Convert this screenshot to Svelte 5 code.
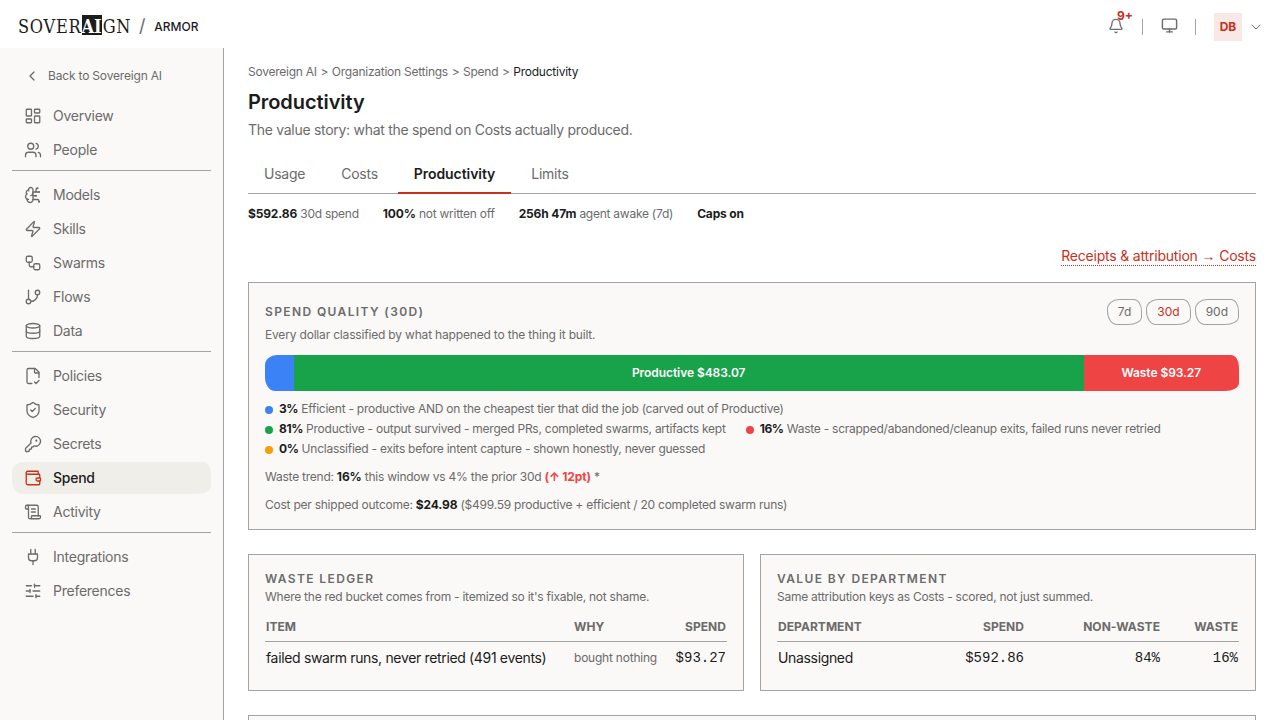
<script>
  const icons = {
    overview: ['M4 3h5a1 1 0 0 1 1 1v7a1 1 0 0 1-1 1H4a1 1 0 0 1-1-1V4a1 1 0 0 1 1-1z', 'M15 3h5a1 1 0 0 1 1 1v3a1 1 0 0 1-1 1h-5a1 1 0 0 1-1-1V4a1 1 0 0 1 1-1z', 'M15 12h5a1 1 0 0 1 1 1v7a1 1 0 0 1-1 1h-5a1 1 0 0 1-1-1v-7a1 1 0 0 1 1-1z', 'M4 16h5a1 1 0 0 1 1 1v3a1 1 0 0 1-1 1H4a1 1 0 0 1-1-1v-3a1 1 0 0 1 1-1z'],
    people: ['M16 21v-2a4 4 0 0 0-4-4H6a4 4 0 0 0-4 4v2', 'M16 3.128a4 4 0 0 1 0 7.744', 'M22 21v-2a4 4 0 0 0-3-3.87', 'M5 7a4 4 0 1 0 8 0a4 4 0 1 0-8 0'],
    models: ['M12 5a3 3 0 1 0-5.997.125 4 4 0 0 0-2.526 5.77 4 4 0 0 0 .556 6.588A4 4 0 1 0 12 18Z', 'M9 13a4.5 4.5 0 0 0 3-4', 'M6.003 5.125A3 3 0 0 0 6.401 6.5', 'M3.477 10.896a4 4 0 0 1 .585-.396', 'M6 18a4 4 0 0 1-1.967-.516', 'M12 13h4', 'M12 18h6a2 2 0 0 1 2 2v1', 'M12 8h8', 'M16 8V5a2 2 0 0 1 2-2', 'M15.5 13a.5.5 0 1 0 1 0a.5.5 0 1 0-1 0', 'M17.5 3a.5.5 0 1 0 1 0a.5.5 0 1 0-1 0', 'M19.5 21a.5.5 0 1 0 1 0a.5.5 0 1 0-1 0', 'M19.5 8a.5.5 0 1 0 1 0a.5.5 0 1 0-1 0'],
    skills: ['M4 14a1 1 0 0 1-.78-1.63l9.9-10.2a.5.5 0 0 1 .86.46l-1.92 6.02A1 1 0 0 0 13 10h7a1 1 0 0 1 .78 1.63l-9.9 10.2a.5.5 0 0 1-.86-.46l1.92-6.02A1 1 0 0 0 11 14z'],
    swarms: ['M5 3h4a2 2 0 0 1 2 2v4a2 2 0 0 1-2 2H5a2 2 0 0 1-2-2V5a2 2 0 0 1 2-2z', 'M7 11v4a2 2 0 0 0 2 2h4', 'M15 13h4a2 2 0 0 1 2 2v4a2 2 0 0 1-2 2h-4a2 2 0 0 1-2-2v-4a2 2 0 0 1 2-2z'],
    flows: ['M6 3v12', 'M15 6a3 3 0 1 0 6 0a3 3 0 1 0-6 0', 'M3 18a3 3 0 1 0 6 0a3 3 0 1 0-6 0', 'M18 9a9 9 0 0 1-9 9'],
    data: ['M3 5a9 3 0 1 0 18 0a9 3 0 1 0-18 0', 'M3 5v14a9 3 0 0 0 18 0V5', 'M3 12a9 3 0 0 0 18 0'],
    policies: ['M10.5 22H6a2 2 0 0 1-2-2V4a2 2 0 0 1 2-2h8a2.4 2.4 0 0 1 1.706.706l3.588 3.588A2.4 2.4 0 0 1 20 8v6', 'M14 2v5a1 1 0 0 0 1 1h5', 'm14 20 2 2 4-4'],
    security: ['M20 13c0 5-3.5 7.5-7.66 8.95a1 1 0 0 1-.67-.01C7.5 20.5 4 18 4 13V6a1 1 0 0 1 1-1c2 0 4.5-1.2 6.24-2.72a1.17 1.17 0 0 1 1.52 0C14.51 3.81 17 5 19 5a1 1 0 0 1 1 1z', 'm9 12 2 2 4-4'],
    secrets: ['M2.586 17.414A2 2 0 0 0 2 18.828V21a1 1 0 0 0 1 1h3a1 1 0 0 0 1-1v-1a1 1 0 0 1 1-1h1a1 1 0 0 0 1-1v-1a1 1 0 0 1 1-1h.172a2 2 0 0 0 1.414-.586l.814-.814a6.5 6.5 0 1 0-4-4z', 'M16 7.5a.5.5 0 1 0 1 0a.5.5 0 1 0-1 0'],
    spend: ['M19 7V4a1 1 0 0 0-1-1H5a2 2 0 0 0 0 4h15a1 1 0 0 1 1 1v4h-3a2 2 0 0 0 0 4h3a1 1 0 0 0 1-1v-2a1 1 0 0 0-1-1', 'M3 5v14a2 2 0 0 0 2 2h15a1 1 0 0 0 1-1v-4'],
    activity: ['M15 12h-5', 'M15 8h-5', 'M19 17V5a2 2 0 0 0-2-2H4', 'M8 21h12a2 2 0 0 0 2-2v-1a1 1 0 0 0-1-1H11a1 1 0 0 0-1 1v1a2 2 0 1 1-4 0V5a2 2 0 1 0-4 0v2a1 1 0 0 0 1 1h3'],
    integrations: ['M12 22v-5', 'M9 8V2', 'M15 8V2', 'M18 8v5a4 4 0 0 1-4 4h-4a4 4 0 0 1-4-4V8Z'],
    preferences: ['M10 5H3', 'M12 19H3', 'M14 3v4', 'M16 17v4', 'M21 12h-9', 'M21 19h-5', 'M21 5h-7', 'M8 10v4', 'M8 12H3'],
    back: ['m15 18-6-6 6-6'],
    down: ['m6 9 6 6 6-6'],
    bell: ['M10.268 21a2 2 0 0 0 3.464 0', 'M3.262 15.326A1 1 0 0 0 4 17h16a1 1 0 0 0 .74-1.673C19.41 13.956 18 12.499 18 8A6 6 0 0 0 6 8c0 4.499-1.411 5.956-2.738 7.326'],
    monitor: ['M4 3h16a2 2 0 0 1 2 2v10a2 2 0 0 1-2 2H4a2 2 0 0 1-2-2V5a2 2 0 0 1 2-2z', 'M8 21h8', 'M12 17v4'],
  };

  const groups = [
    ['Overview', 'People'],
    ['Models', 'Skills', 'Swarms', 'Flows', 'Data'],
    ['Policies', 'Security', 'Secrets', 'Spend', 'Activity'],
    ['Integrations', 'Preferences'],
  ];

  const crumbs = ['Sovereign AI', 'Organization Settings', 'Spend'];
  const tabs = ['Usage', 'Costs', 'Productivity', 'Limits'];
  const ranges = ['7d', '30d', '90d'];

  const stats = [
    { value: '$592.86', label: '30d spend' },
    { value: '100%', label: 'not written off' },
    { value: '256h 47m', label: 'agent awake (7d)' },
    { value: 'Caps on', label: '' },
  ];

  const segments = [
    { kind: 'efficient', width: 2.95, label: '' },
    { kind: 'productive', width: 81.1, label: 'Productive $483.07' },
    { kind: 'waste', width: 15.95, label: 'Waste $93.27' },
  ];

  const legend = [
    { kind: 'efficient', pct: '3%', text: 'Efficient - productive AND on the cheapest tier that did the job (carved out of Productive)' },
    { kind: 'productive', pct: '81%', text: 'Productive - output survived - merged PRs, completed swarms, artifacts kept' },
    { kind: 'waste', pct: '16%', text: 'Waste - scrapped/abandoned/cleanup exits, failed runs never retried' },
    { kind: 'unknown', pct: '0%', text: 'Unclassified - exits before intent capture - shown honestly, never guessed' },
  ];

  let page = $state('Spend');
  let tab = $state('Productivity');
  let range = $state('30d');
</script>

{#snippet icon(name, size, stroke = 1.75)}
  <svg width={size} height={size} viewBox="0 0 24 24" fill="none" stroke="currentColor" stroke-width={stroke} stroke-linecap="round" stroke-linejoin="round" aria-hidden="true">
    {#each icons[name] as d}<path {d} />{/each}
  </svg>
{/snippet}

<div class="app">
  <header class="topbar">
    <div class="logo">SOVER<span class="logo-ai">AI</span>GN</div>
    <span class="slash">/</span>
    <span class="org">ARMOR</span>
    <div class="tools">
      <button class="tool">{@render icon('bell', 16, 2)}<span class="count">9+</span></button>
      <span class="sep"></span>
      <button class="tool">{@render icon('monitor', 17, 2)}</button>
      <span class="sep"></span>
      <button class="user"><span class="avatar">DB</span>{@render icon('down', 16, 1.5)}</button>
    </div>
  </header>

  <div class="body">
    <nav class="sidebar">
      <button class="back">{@render icon('back', 16, 2)}<span>Back to Sovereign AI</span></button>
      {#each groups as group}
        <div class="group">
          {#each group as name}
            <button class="item" class:active={page === name} onclick={() => (page = name)}>
              {@render icon(name.toLowerCase(), 18)}
              <span>{name}</span>
            </button>
          {/each}
        </div>
      {/each}
    </nav>

    <main class="main">
      <div class="crumbs">
        {#each crumbs as crumb}<span>{crumb}</span><span>&gt;</span>{/each}
        <span class="here">Productivity</span>
      </div>
      <h1>Productivity</h1>
      <p class="lead">The value story: what the spend on Costs actually produced.</p>

      <div class="tabs">
        {#each tabs as name}
          <button class="tab" class:active={tab === name} onclick={() => (tab = name)}>{name}</button>
        {/each}
      </div>

      <div class="stats">
        {#each stats as stat}
          <span><b>{stat.value}</b> {stat.label}</span>
        {/each}
      </div>

      <div class="receipts"><a href="#costs">Receipts &amp; attribution <span class="arrow">→</span> Costs</a></div>

      <section class="card quality">
        <div class="card-head">
          <h2>Spend quality (30d)</h2>
          <div class="ranges">
            {#each ranges as r}
              <button class="pill" class:active={range === r} onclick={() => (range = r)}>{r}</button>
            {/each}
          </div>
        </div>
        <p class="hint">Every dollar classified by what happened to the thing it built.</p>

        <div class="bar">
          {#each segments as seg}
            <div class="seg {seg.kind}" style:width="{seg.width}%">{seg.label}</div>
          {/each}
        </div>

        <div class="legend">
          {#each legend as row}
            <span class="key"><i class="dot {row.kind}"></i><span><b>{row.pct}</b> {row.text}</span></span>
          {/each}
        </div>

        <p class="note">Waste trend: <b>16%</b> this window vs 4% the prior 30d <b class="up">(↑ 12pt)</b> *</p>
        <p class="note">Cost per shipped outcome: <b>$24.98</b> ($499.59 productive + efficient / 20 completed swarm runs)</p>
      </section>

      <div class="pair">
        <section class="card">
          <h2>Waste ledger</h2>
          <p class="hint">Where the red bucket comes from - itemized so it's fixable, not shame.</p>
          <table class="ledger">
            <thead><tr><th>Item</th><th>Why</th><th class="num">Spend</th></tr></thead>
            <tbody>
              <tr><td>failed swarm runs, never retried (491 events)</td><td class="why">bought nothing</td><td class="num">$93.27</td></tr>
            </tbody>
          </table>
        </section>

        <section class="card">
          <h2>Value by department</h2>
          <p class="hint">Same attribution keys as Costs - scored, not just summed.</p>
          <table class="depts">
            <thead><tr><th>Department</th><th class="num">Spend</th><th class="num">Non-waste</th><th class="num">Waste</th></tr></thead>
            <tbody>
              <tr><td>Unassigned</td><td class="num">$592.86</td><td class="num">84%</td><td class="num">16%</td></tr>
            </tbody>
          </table>
        </section>
      </div>

      <section class="card next"></section>
    </main>
  </div>
</div>

<style>
  :global(body) {
    background: #fff;
    overflow: hidden;
  }

  .app {
    --ink: #1c1c1c;
    --muted: #6b6b6b;
    --line: #a3a3a3;
    --panel: #faf9f7;
    --accent: #c9301c;
    --wobble: 12px 8px 14px 10px / 10px 12px 8px 14px;
    height: 100vh;
    display: flex;
    flex-direction: column;
    overflow: hidden;
    font-family: Inter, "Liberation Sans", sans-serif;
    font-size: 14px;
    line-height: 20px;
    letter-spacing: -0.25px;
    color: var(--ink);
  }

  button {
    font: inherit;
    letter-spacing: inherit;
    color: inherit;
    background: none;
    border: none;
    padding: 0;
    cursor: pointer;
  }
  svg { display: block; flex-shrink: 0; }
  h1, h2, p { margin: 0; }
  b { font-weight: 700; letter-spacing: -0.15px; color: var(--ink); }

  .topbar {
    height: 48px;
    flex-shrink: 0;
    display: flex;
    align-items: center;
    padding: 5px 16px 0 18px;
    box-sizing: border-box;
  }
  .logo {
    display: flex;
    width: 113px;
    height: 20px;
    margin-top: -3px;
    font-family: "DejaVu Serif Condensed", "DejaVu Serif", serif;
    font-stretch: condensed;
    font-size: 18px;
    line-height: 24px;
    letter-spacing: 0.75px;
    white-space: nowrap;
  }
  .logo-ai {
    width: 23px;
    margin-right: 1px;
    background: var(--ink);
    color: #fff;
    font-weight: 700;
    text-align: center;
    letter-spacing: 0;
  }
  .slash { margin: -2px 0 0 8px; font-size: 18px; color: var(--muted); }
  .org { margin-left: 9px; font-size: 12px; font-weight: 500; letter-spacing: 0; }

  .tools { margin-left: auto; display: flex; align-items: center; color: var(--muted); }
  .tool { position: relative; top: -1px; }
  .count {
    position: absolute;
    left: 9px;
    top: -10px;
    font-size: 12px;
    line-height: 16px;
    letter-spacing: 0;
    font-weight: 700;
    color: var(--accent);
  }
  .sep { width: 1px; height: 16px; margin: 0 18px 0 17.5px; background: var(--line); }
  .user { display: flex; align-items: center; gap: 6px; }
  .avatar {
    width: 28px;
    height: 28px;
    background: #f9e9e6;
    color: var(--accent);
    font-size: 12px;
    line-height: 28px;
    font-weight: 700;
    letter-spacing: 0;
  }

  .body { flex: 1; min-height: 0; display: flex; }

  .sidebar {
    width: 224px;
    flex-shrink: 0;
    box-sizing: border-box;
    padding: 12px 12px 0;
    background: var(--panel);
    border-right: 1px solid var(--line);
    color: var(--muted);
  }
  .back {
    display: flex;
    align-items: center;
    gap: 8px;
    height: 32px;
    padding-left: 12px;
    margin-bottom: 8px;
    font-size: 12px;
    letter-spacing: -0.18px;
  }
  .group { display: flex; flex-direction: column; gap: 2px; }
  .group + .group { margin-top: 4px; padding-top: 8px; border-top: 1px solid var(--line); }
  .item {
    display: flex;
    align-items: center;
    gap: 11px;
    height: 32px;
    padding-left: 12px;
    text-align: left;
  }
  .item.active {
    background: #f0eee9;
    color: var(--ink);
    font-weight: 500;
    border-radius: var(--wobble);
  }
  .item.active :global(svg) { color: var(--accent); }

  .main { flex: 1; min-width: 0; padding: 14px 24px 0; }

  .crumbs { display: flex; gap: 3.7px; font-size: 12px; color: var(--muted); }
  .crumbs .here { color: var(--ink); }
  h1 { margin-top: 6px; font-size: 20px; line-height: 28px; font-weight: 600; letter-spacing: -0.07px; }
  .lead { margin-top: 4px; letter-spacing: -0.29px; color: var(--muted); }

  .tabs { display: flex; gap: 4px; margin-top: 14px; border-bottom: 1px solid var(--line); }
  .tab {
    height: 40px;
    padding: 2px 16px 0;
    margin-bottom: -1px;
    color: var(--muted);
    border-bottom: 2px solid transparent;
  }
  .tab.active { color: var(--ink); font-weight: 600; letter-spacing: -0.06px; border-color: var(--accent); }

  .stats { display: flex; gap: 24px; margin-top: 10px; font-size: 12px; color: var(--muted); }
  .receipts { margin-top: 22px; text-align: right; }
  .receipts a {
    padding-bottom: 1px;
    color: var(--accent);
    letter-spacing: -0.2px;
    text-decoration: none;
    border-bottom: 1px dotted var(--accent);
  }
  .arrow { font-family: "Liberation Sans", sans-serif; letter-spacing: 0; }

  .card {
    box-sizing: border-box;
    padding: 16px;
    background: var(--panel);
    border: 1px solid var(--line);
  }
  .quality { height: 248px; margin-top: 16px; }
  .quality .hint { letter-spacing: -0.18px; }
  .card-head { display: flex; align-items: center; justify-content: space-between; }
  h2 {
    font-size: 12px;
    line-height: 16px;
    font-weight: 600;
    letter-spacing: 1.38px;
    text-transform: uppercase;
    color: var(--muted);
  }
  .hint { font-size: 12px; color: var(--muted); }
  .ranges { display: flex; gap: 4px; }
  .pill {
    height: 26px;
    padding: 0 10px;
    border: 1px solid var(--line);
    border-radius: var(--wobble);
    font-size: 12px;
    letter-spacing: 0;
    color: var(--muted);
  }
  .pill.active { color: var(--accent); }

  .bar {
    display: flex;
    height: 36px;
    margin-top: 10px;
    overflow: hidden;
    border-radius: var(--wobble);
  }
  .seg {
    color: #fff;
    font-size: 12px;
    font-weight: 600;
    line-height: 36px;
    letter-spacing: -0.06px;
    text-align: center;
    white-space: nowrap;
  }
  .efficient { background: #3b82f6; }
  .productive { background: #18a34a; }
  .waste { background: #ef4444; }
  .unknown { background: #f59e0b; }

  .legend {
    display: flex;
    flex-wrap: wrap;
    column-gap: 20px;
    margin-top: 8px;
    font-size: 12px;
    letter-spacing: -0.25px;
    color: var(--muted);
  }
  .legend b { letter-spacing: -0.4px; }
  .key { display: flex; align-items: center; gap: 6px; white-space: nowrap; }
  .dot { width: 8px; height: 8px; margin-top: 2px; border-radius: 50%; }
  .note { margin-top: 8px; font-size: 12px; letter-spacing: -0.24px; color: var(--muted); }
  .up { color: #ef4444; }

  .pair { display: grid; grid-template-columns: 1fr 1fr; gap: 16px; margin-top: 24px; }
  .pair .card { height: 137px; }

  table { width: 100%; margin-top: 8px; border-collapse: collapse; table-layout: fixed; }
  th, td { padding: 0 1px; text-align: left; font-weight: 400; white-space: nowrap; }
  th {
    height: 23px;
    padding-bottom: 3px;
    font-size: 12px;
    line-height: 16px;
    font-weight: 700;
    letter-spacing: 0.05px;
    text-transform: uppercase;
    color: var(--muted);
    border-bottom: 1px solid var(--line);
  }
  td { height: 32px; letter-spacing: -0.34px; }
  .num { text-align: right; }
  td.num { font-family: "Liberation Mono", monospace; letter-spacing: 0; }
  td.why { font-size: 12px; letter-spacing: -0.22px; color: var(--muted); }
  .ledger th:nth-child(1) { width: 306px; }
  .ledger th:nth-child(2) { width: 90px; }
  .depts th:nth-child(1) { width: 146px; }
  .depts th:nth-child(2) { width: 98px; }
  .depts th:nth-child(3) { width: 134px; }

  .next { height: 120px; margin-top: 24px; }
</style>
